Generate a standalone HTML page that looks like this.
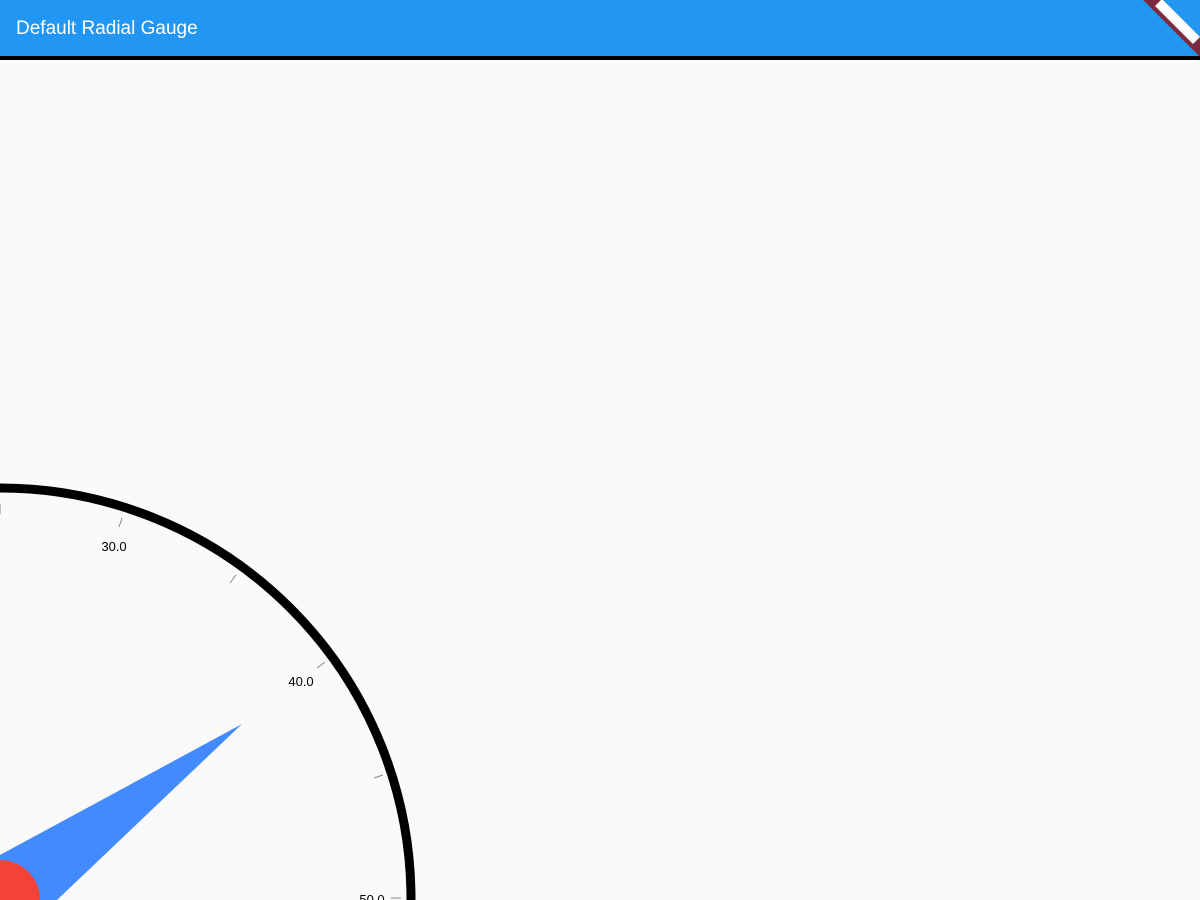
<!DOCTYPE html>
<html><head><style>
html,body{margin:0;padding:0;width:1200px;height:900px;overflow:hidden;background:#fafafa;font-family:"Liberation Sans",sans-serif;}
.bar{position:absolute;left:0;top:0;width:1200px;height:56px;background:#2196f3;border-bottom:4px solid #000;}
.title{position:absolute;left:16px;top:18px;color:#fff;font-size:19px;font-weight:500;letter-spacing:0px;}
svg{display:block;overflow:hidden}
</style></head><body>
<div class="bar"><div class="title">Default Radial Gauge</div></div>
<svg width="1200" height="900" style="position:absolute;left:0;top:0">
<polygon points="1143,0 1163,0 1200,37 1200,57" fill="#7b2a40"/>
<polygon points="1155,6 1162,-1 1200,37 1193,44" fill="#fff"/>
<circle cx="0" cy="899" r="411" fill="none" stroke="#000" stroke-width="9"/>
<g stroke="#888" stroke-width="1">
<line x1="0" y1="504" x2="0" y2="514"/>
<line x1="122" y1="518" x2="119" y2="527"/>
<line x1="236" y1="575" x2="230" y2="583"/>
<line x1="325" y1="662" x2="317" y2="668"/>
<line x1="383" y1="775" x2="374" y2="778"/>
<line x1="401" y1="898" x2="391" y2="898"/>
</g>
<g font-size="13" fill="#000" text-anchor="middle">
<text x="114" y="551">30.0</text>
<text x="301" y="686">40.0</text>
<text x="372" y="904">50.0</text>
</g>
<polygon points="242,724 0,855 -20,900 57,900" fill="#448aff"/>
<circle cx="0" cy="900" r="40" fill="#f44336"/>
</svg>
</body></html>
